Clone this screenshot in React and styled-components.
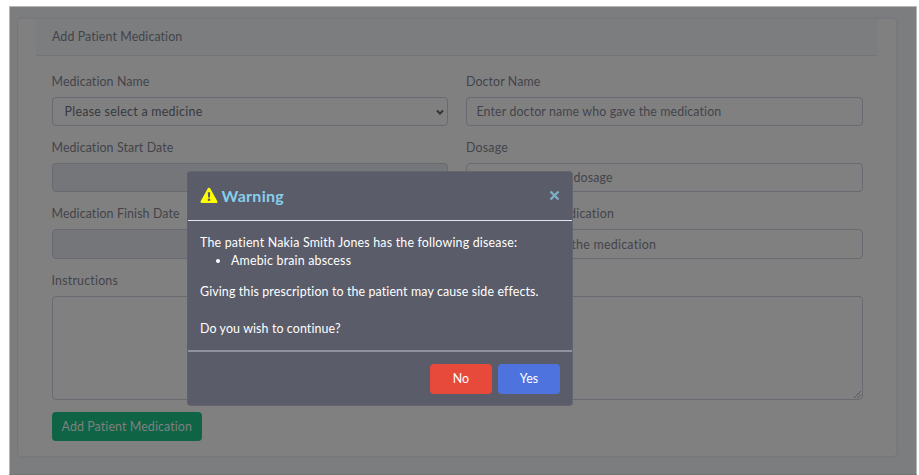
import React from "react";
import styled, { createGlobalStyle } from "styled-components";

const Global = createGlobalStyle`
  * { box-sizing: border-box; }
  body { margin: 0; background: #fff; overflow: hidden; }
  body, input, select, textarea, button {
    font-family: Lato, "Open Sans", sans-serif;
    font-size: 12.4px;
    line-height: 18.5px;
    letter-spacing: 0.1px;
  }
`;

const Page = styled.div`
  position: relative;
  width: 919px;
  height: 475px;
  padding: 6px 2px 0 9px;
  overflow: hidden;
`;

const Screen = styled.div`
  height: 469px;
  padding: 10px 18px 0 7px;
  background: #7c7d7e;
  border: 1px solid #b6b6b7;
  border-bottom-color: #757579;
`;

const Card = styled.main`
  height: 441px;
  padding: 0 18px 0 18px;
  background: #808080;
  border: 1px solid #76777b;
  border-top: 2px solid #78797c;
  border-right: 2px solid #78797c;
  border-bottom: 2px solid #78797c;
  border-radius: 5px;
`;

const CardHeader = styled.header`
  height: 37px;
  padding: 9.4px 16px 0;
  background: #7c7d7e;
  border-bottom: 1px solid #747579;
  color: #43444b;
`;

const Form = styled.form`
  padding: 15.5px 15px 0 15.5px;
`;

const Row = styled.div`
  display: grid;
  grid-template-columns: 396.5px 397px;
  column-gap: 18px;
  height: 66.4px;
`;

const Label = styled.label`
  display: block;
  height: 25px;
  padding-top: 1px;
  color: #43444b;
  white-space: nowrap;
  letter-spacing: ${(p) => p.$track ?? 0.1}px;
`;

const Input = styled.input`
  display: block;
  width: 100%;
  height: 29.5px;
  padding: 0 9.5px;
  background: ${(p) => (p.disabled ? "#75767a" : "#808080")};
  border: 1px solid #696a71;
  border-radius: 4px;
  outline: none;
  letter-spacing: ${(p) => p.$track ?? 0.1}px;
  &::placeholder { color: #43444b; opacity: 1; }
`;

const SelectWrap = styled.div`
  position: relative;
  svg { position: absolute; right: 4px; top: 12px; }
`;

const Select = styled.select`
  appearance: none;
  display: block;
  width: 100%;
  height: 29.5px;
  padding: 1px 12px 0;
  background: #808080;
  border: 1px solid #696a71;
  border-radius: 4px;
  color: #37383f;
  letter-spacing: 0.28px;
`;

const AreaWrap = styled.div`
  position: relative;
  svg { position: absolute; right: 1px; bottom: 1px; }
`;

const Area = styled.textarea`
  display: block;
  width: 811.5px;
  height: 104px;
  background: #808080;
  border: 1px solid #696a71;
  border-radius: 4px;
  resize: none;
`;

const Button = styled.button`
  height: 29.5px;
  width: ${(p) => p.$width}px;
  padding: 0;
  border: 0;
  border-radius: 4px;
  background: ${(p) => p.$bg};
  color: ${(p) => p.$color || "#fff"};
  white-space: nowrap;
`;

const Submit = styled(Button)`
  display: block;
  margin-top: 12px;
  padding-top: 1px;
`;

const Dialog = styled.section`
  position: absolute;
  left: 187px;
  top: 171px;
  width: 386px;
  height: 235px;
  background: #5a5c69;
  border: 1px solid #65666e;
  border-left-color: #5f606b;
  border-radius: 4px;
  color: #fff;
`;

const DialogHeader = styled.header`
  display: flex;
  align-items: flex-start;
  height: 49px;
  padding: 15px 12px 0 11.5px;
  border-bottom: 1px solid #e3e6f0;
`;

const Title = styled.h2`
  margin: -1.5px 0 0 4px;
  flex: 1;
  color: #87ceeb;
  font-size: 16px;
  line-height: 20px;
  font-weight: 700;
  letter-spacing: 0.3px;
`;

const Close = styled.button`
  padding: 0;
  width: 11px;
  height: 11px;
  margin-top: 3px;
  border: 0;
  background: none;
  svg { display: block; }
`;

const DialogBody = styled.div`
  height: 129px;
  padding: 12.5px 12px 0;
`;

const Line = styled.p`
  margin: 0 0 ${(p) => p.$gap || 0}px;
  white-space: nowrap;
  letter-spacing: ${(p) => p.$track ?? 0.1}px;
`;

const List = styled.ul`
  margin: 0 0 12.5px;
  padding-left: 31px;
  letter-spacing: 0.2px;
`;

const DialogFooter = styled.footer`
  display: flex;
  justify-content: flex-end;
  gap: 6px;
  padding: 12px 12px 0;
  border-top: 2px solid #9092a0;
`;

export default function App() {
  return (
    <>
      <Global />
      <Page>
        <Screen>
          <Card>
            <CardHeader>Add Patient Medication</CardHeader>
            <Form>
              <Row>
                <div>
                  <Label>Medication Name</Label>
                  <SelectWrap>
                    <Select>
                      <option>Please select a medicine</option>
                    </Select>
                    <svg width="8" height="7" viewBox="0 0 8 7">
                      <path d="M1 1.5 4 4.6 7 1.5" fill="none" stroke="#303138" strokeWidth="1.9" />
                    </svg>
                  </SelectWrap>
                </div>
                <div>
                  <Label>Doctor Name</Label>
                  <Input $track={0.12} placeholder="Enter doctor name who gave the medication" />
                </div>
              </Row>
              <Row>
                <div>
                  <Label>Medication Start Date</Label>
                  <Input disabled />
                </div>
                <div>
                  <Label $track={0.2}>Dosage</Label>
                  <Input placeholder="Enter medication dosage" />
                </div>
              </Row>
              <Row>
                <div>
                  <Label>Medication Finish Date</Label>
                  <Input disabled />
                </div>
                <div>
                  <Label $track={0.24}>Reason for the medication</Label>
                  <Input $track={0.27} placeholder="Enter reason for the medication" />
                </div>
              </Row>
              <Label $track={0.2}>Instructions</Label>
              <AreaWrap>
                <Area />
                <svg width="9" height="9" viewBox="0 0 9 9">
                  <path d="M1 8 8 1M4.5 8 8 4.5" stroke="#45454a" strokeWidth="1" strokeDasharray="1.4 .6" />
                </svg>
              </AreaWrap>
              <Submit type="button" $width={150.5} $bg="#0e6445" $color="#808080">
                Add Patient Medication
              </Submit>
            </Form>
          </Card>
        </Screen>
        <Dialog role="dialog">
          <DialogHeader>
            <svg width="18" height="17" viewBox="0 0 18 17">
              <path d="M9 2 16.2 14.8H1.8Z" fill="#ff0" stroke="#ff0" strokeWidth="2.6" strokeLinejoin="round" />
              <path d="M7.8 5.2h2.4l-.3 5.2H8.1Z" fill="#5a5c69" />
              <circle cx="9" cy="12.7" r="1.3" fill="#5a5c69" />
            </svg>
            <Title>Warning</Title>
            <Close aria-label="Close">
              <svg width="11" height="11" viewBox="0 0 11 11">
                <path d="m1.5 1.5 8 8m0-8-8 8" stroke="#7caec6" strokeWidth="2.4" />
              </svg>
            </Close>
          </DialogHeader>
          <DialogBody>
            <Line $track={0.2}>The patient Nakia Smith Jones has the following disease:</Line>
            <List>
              <li>Amebic brain abscess</li>
            </List>
            <Line $gap={18.5} $track={0.13}>Giving this prescription to the patient may cause side effects.</Line>
            <Line $track={0.12}>Do you wish to continue?</Line>
          </DialogBody>
          <DialogFooter>
            <Button $width={62} $bg="#e74a3b">No</Button>
            <Button $width={62} $bg="#4e73df">Yes</Button>
          </DialogFooter>
        </Dialog>
      </Page>
    </>
  );
}
